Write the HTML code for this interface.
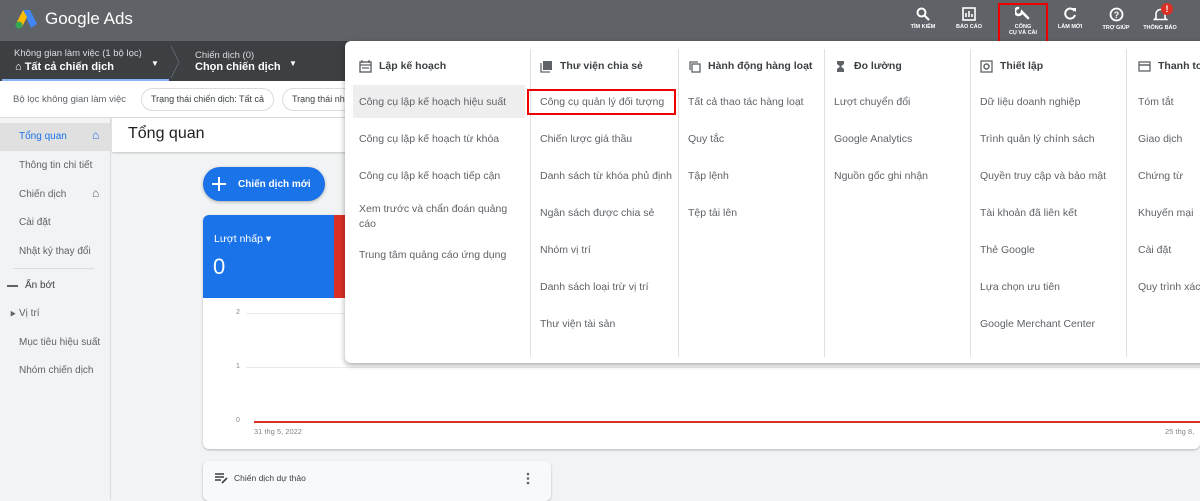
<!DOCTYPE html>
<html><head><meta charset="utf-8"><style>
*{box-sizing:border-box;margin:0;padding:0}
body{width:1200px;height:500px;overflow:hidden;position:relative;background:#f1f3f4;font-family:"Liberation Sans","Noto Sans CJK SC",sans-serif;color:#3c4043}
.a{position:absolute;white-space:nowrap}
.top{left:0;top:0;width:1200px;height:41px;background:#5f6368}
.bar2{left:0;top:41px;width:1200px;height:40px;background:#3c4043}
.filt{left:0;top:81px;width:1200px;height:37px;background:#fff;border-bottom:1px solid #dadce0}
.side{left:0;top:118px;width:111px;height:382px;background:#f1f3f4;border-right:1px solid #dadce0}
.si{font-size:10px;color:#5f6368;left:19px}
.ti{font-size:5.5px;color:#fff;font-weight:bold;text-align:center;width:50px;line-height:6px}
.ti svg{display:block;margin:0 auto 3px}
.menu{left:345px;top:41px;width:870px;height:322px;background:#fff;border-radius:6px;box-shadow:0 2px 6px rgba(0,0,0,.35)}
.dv{top:8px;width:1px;height:308px;background:#e0e0e0}
.mh{font-size:10.5px;color:#3c4043;font-weight:bold;top:18px;line-height:14px}
.mh svg{position:absolute;left:0;top:1px}
.mh span{position:absolute;left:20px;top:0}
.mi{font-size:10.5px;color:#5f6368}
.chip{top:88px;height:23px;border:1px solid #dadce0;border-radius:12px;font-size:9px;color:#3c4043;padding:5px 9px}
</style></head><body>
<div class="a top"></div>
<svg class="a" style="left:14px;top:9px" width="24" height="20" viewBox="0 0 24 20"><path d="M9 1 L16 1 L23 15 L17 19 Z" fill="#4285f4"/><path d="M9 1 L2 15 L8 18 L13 8Z" fill="#fbbc04"/><circle cx="5" cy="16" r="3.5" fill="#34a853"/></svg>
<div class="a" style="left:45px;top:9px;font-size:17px;color:#fff">Google Ads</div>
<div class="a ti" style="left:898px;top:7px"><svg width="14" height="14" viewBox="0 0 14 14"><circle cx="5.5" cy="5.5" r="4" stroke="#fff" stroke-width="2" fill="none"/><path d="M8.5 8.5L13 13" stroke="#fff" stroke-width="2.2"/></svg>TÌM KIẾM</div>
<div class="a ti" style="left:944px;top:7px"><svg width="14" height="14" viewBox="0 0 14 14"><rect x="1" y="1" width="12" height="12" stroke="#fff" stroke-width="1.6" fill="none"/><path d="M4 10V6M7 10V4M10 10V7" stroke="#fff" stroke-width="1.6"/></svg>BÁO CÁO</div>
<div class="a ti" style="left:998px;top:6px"><svg width="16" height="15" viewBox="0 0 16 15"><path d="M3 2 A3.5 3.5 0 1 0 7 6 L13 12" stroke="#fff" stroke-width="2.6" fill="none" stroke-linecap="round"/></svg>CÔNG<br>CỤ VÀ CÀI</div>
<div class="a" style="left:998px;top:3px;width:50px;height:42px;border:2px solid #e00"></div>
<div class="a ti" style="left:1045px;top:7px"><svg width="14" height="14" viewBox="0 0 14 14"><path d="M11.5 4A5 5 0 1 0 12 8" stroke="#fff" stroke-width="2" fill="none"/><path d="M9 1L13 1L13 5Z" fill="#fff"/></svg>LÀM MỚI</div>
<div class="a ti" style="left:1091px;top:7px"><svg width="15" height="15" viewBox="0 0 15 15"><circle cx="7.5" cy="7.5" r="6" stroke="#fff" stroke-width="1.8" fill="none"/><text x="4.8" y="11" font-size="9" font-weight="bold" fill="#fff" font-family="Liberation Sans">?</text></svg>TRỢ GIÚP</div>
<div class="a ti" style="left:1135px;top:7px"><svg width="15" height="15" viewBox="0 0 15 15"><path d="M3 11V7a4.5 4.5 0 0 1 9 0v4l1.5 1.5h-12Z" stroke="#fff" stroke-width="1.6" fill="none"/></svg>THÔNG BÁO</div>
<div class="a" style="left:1161px;top:3px;width:12px;height:12px;border-radius:6px;background:#d93025;color:#fff;font-size:9px;font-weight:bold;text-align:center;line-height:12px">!</div>
<div class="a bar2"></div>
<div class="a" style="left:14px;top:48px;font-size:9.5px;color:#dadce0">Không gian làm việc (1 bộ lọc)</div>
<div class="a" style="left:15px;top:61px;font-size:11px;color:#fff;font-weight:bold">⌂ Tất cả chiến dịch</div>
<div class="a" style="left:151px;top:59px;font-size:8px;color:#fff">▼</div>
<div class="a" style="left:2px;top:79px;width:167px;height:2px;background:#8ab4f8"></div>
<svg class="a" style="left:170px;top:45px" width="10" height="34"><path d="M1 1L9 17L1 33" stroke="#5f6368" fill="none"/></svg>
<div class="a" style="left:195px;top:50px;font-size:9.5px;color:#dadce0">Chiến dịch (0)</div>
<div class="a" style="left:195px;top:61px;font-size:11px;color:#fff;font-weight:bold">Chọn chiến dịch</div>
<div class="a" style="left:289px;top:59px;font-size:8px;color:#fff">▼</div>
<div class="a filt"></div>
<div class="a" style="left:13px;top:94px;font-size:9.5px;color:#5f6368">Bộ lọc không gian làm việc</div>
<div class="a chip" style="left:141px">Trạng thái chiến dịch: Tất cả</div>
<div class="a chip" style="left:282px;width:80px;overflow:hidden">Trạng thái nhóm</div>
<div class="a side"></div>
<div class="a" style="left:0;top:123px;width:111px;height:28px;background:#e0e0e0"></div>
<div class="a si" style="top:131px;color:#1a73e8">Tổng quan</div>
<div class="a" style="left:92px;top:128px;font-size:12px;color:#1a73e8">⌂</div>
<div class="a si" style="top:160px">Thông tin chi tiết</div>
<div class="a si" style="top:189px">Chiến dịch</div>
<div class="a" style="left:92px;top:186px;font-size:12px;color:#5f6368">⌂</div>
<div class="a si" style="top:217px">Cài đặt</div>
<div class="a si" style="top:246px">Nhật ký thay đổi</div>
<div class="a" style="left:13px;top:268px;width:81px;height:1px;background:#dadce0"></div>
<div class="a" style="left:7px;top:285px;width:11px;height:1.5px;background:#5f6368"></div>
<div class="a si" style="left:25px;top:280px;color:#3c4043">Ẩn bớt</div>
<div class="a" style="left:10px;top:309px;font-size:6px;color:#5f6368">▶</div>
<div class="a si" style="top:308px">Vị trí</div>
<div class="a si" style="top:337px">Mục tiêu hiệu suất</div>
<div class="a si" style="top:365px">Nhóm chiến dịch</div>
<div class="a" style="left:112px;top:118px;width:1088px;height:34px;background:#fff;box-shadow:0 1px 2px rgba(0,0,0,.2)"></div>
<div class="a" style="left:128px;top:125px;font-size:16px;color:#202124">Tổng quan</div>
<div class="a" style="left:203px;top:167px;width:122px;height:34px;border-radius:17px;background:#1a73e8;box-shadow:0 1px 3px rgba(0,0,0,.3);color:#fff;font-size:10px;font-weight:bold;padding:12px 0 0 35px">Chiến dịch mới</div>
<svg class="a" style="left:212px;top:177px" width="14" height="14"><path d="M7 0V14M0 7H14" stroke="#fff" stroke-width="2"/></svg>
<div class="a" style="left:203px;top:215px;width:997px;height:234px;background:#fff;border-radius:6px;box-shadow:0 1px 2px rgba(0,0,0,.25)"></div>
<div class="a" style="left:203px;top:215px;width:131px;height:83px;background:#1a73e8;border-radius:6px 0 0 0"></div>
<div class="a" style="left:334px;top:215px;width:12px;height:83px;background:#d93025"></div>
<div class="a" style="left:214px;top:233px;font-size:10.5px;color:#fff">Lượt nhấp ▾</div>
<div class="a" style="left:213px;top:254px;font-size:22px;color:#fff">0</div>
<div class="a" style="left:236px;top:309px;font-size:7px;color:#80868b">2</div>
<div class="a" style="left:236px;top:363px;font-size:7px;color:#80868b">1</div>
<div class="a" style="left:236px;top:417px;font-size:7px;color:#80868b">0</div>
<div class="a" style="left:246px;top:313px;width:954px;height:1px;background:#e8eaed"></div>
<div class="a" style="left:246px;top:367px;width:954px;height:1px;background:#e8eaed"></div>
<div class="a" style="left:254px;top:421px;width:946px;height:1.5px;background:#d93025"></div>
<div class="a" style="left:254px;top:427px;font-size:7.5px;color:#80868b">31 thg 5, 2022</div>
<div class="a" style="left:1165px;top:427px;font-size:7.5px;color:#80868b">25 thg 8,</div>
<div class="a" style="left:203px;top:461px;width:348px;height:40px;background:#f8f9fa;border-radius:6px;box-shadow:0 1px 2px rgba(0,0,0,.25)"></div>
<svg class="a" style="left:215px;top:473px" width="13" height="11"><path d="M0 1H9M0 4H9M0 7H6" stroke="#3c4043" stroke-width="1.4"/><path d="M7 10L12 5" stroke="#3c4043" stroke-width="1.6"/></svg>
<div class="a" style="left:234px;top:473px;font-size:8.5px;color:#3c4043">Chiến dịch dự thảo</div>
<svg class="a" style="left:526px;top:472px" width="4" height="13"><circle cx="2" cy="2" r="1.3" fill="#5f6368"/><circle cx="2" cy="6.5" r="1.3" fill="#5f6368"/><circle cx="2" cy="11" r="1.3" fill="#5f6368"/></svg>
<div class="a menu">
<div class="a dv" style="left:185px"></div><div class="a dv" style="left:333px"></div><div class="a dv" style="left:479px"></div><div class="a dv" style="left:625px"></div><div class="a dv" style="left:781px"></div>
<div class="a" style="left:8px;top:44px;width:172px;height:33px;background:#eeeeee"></div>
<div class="a mh" style="left:14px"><svg width="13" height="13" viewBox="0 0 13 13"><rect x="1" y="2" width="11" height="10" stroke="#5f6368" stroke-width="1.4" fill="none"/><path d="M1 5H12M3 0V3M10 0V3M3 8H10" stroke="#5f6368" stroke-width="1.3"/></svg><span>Lập kế hoạch</span></div>
<div class="a mi" style="left:14px;top:55px">Công cụ lập kế hoạch hiệu suất</div>
<div class="a mi" style="left:14px;top:92px">Công cụ lập kế hoạch từ khóa</div>
<div class="a mi" style="left:14px;top:129px">Công cụ lập kế hoạch tiếp cận</div>
<div class="a mi" style="left:14px;top:161px;line-height:15px">Xem trước và chẩn đoán quảng<br>cáo</div>
<div class="a mi" style="left:14px;top:208px">Trung tâm quảng cáo ứng dụng</div>
<div class="a mh" style="left:195px"><svg width="13" height="13" viewBox="0 0 13 13"><rect x="3" y="1" width="9" height="9" fill="#5f6368"/><path d="M1 3V12H10" stroke="#5f6368" stroke-width="1.3" fill="none"/></svg><span>Thư viện chia sẻ</span></div>
<div class="a" style="left:182px;top:48px;width:149px;height:26px;border:2px solid #e00"></div>
<div class="a mi" style="left:195px;top:55px">Công cụ quản lý đối tượng</div>
<div class="a mi" style="left:195px;top:92px">Chiến lược giá thầu</div>
<div class="a mi" style="left:195px;top:129px">Danh sách từ khóa phủ định</div>
<div class="a mi" style="left:195px;top:166px">Ngân sách được chia sẻ</div>
<div class="a mi" style="left:195px;top:203px">Nhóm vị trí</div>
<div class="a mi" style="left:195px;top:240px">Danh sách loại trừ vị trí</div>
<div class="a mi" style="left:195px;top:277px">Thư viện tài sản</div>
<div class="a mh" style="left:343px"><svg width="13" height="13" viewBox="0 0 13 13"><rect x="4" y="4" width="8" height="8" stroke="#5f6368" stroke-width="1.3" fill="none"/><path d="M2 10V2H10" stroke="#5f6368" stroke-width="1.3" fill="none"/></svg><span>Hành động hàng loạt</span></div>
<div class="a mi" style="left:343px;top:55px">Tất cả thao tác hàng loạt</div>
<div class="a mi" style="left:343px;top:92px">Quy tắc</div>
<div class="a mi" style="left:343px;top:129px">Tập lệnh</div>
<div class="a mi" style="left:343px;top:166px">Tệp tải lên</div>
<div class="a mh" style="left:489px"><svg width="13" height="13" viewBox="0 0 13 13"><path d="M3 1H10V4L7 6.5L10 9V12H3V9L6 6.5L3 4Z" fill="#5f6368"/></svg><span>Đo lường</span></div>
<div class="a mi" style="left:489px;top:55px">Lượt chuyển đổi</div>
<div class="a mi" style="left:489px;top:92px">Google Analytics</div>
<div class="a mi" style="left:489px;top:129px">Nguồn gốc ghi nhận</div>
<div class="a mh" style="left:635px"><svg width="13" height="13" viewBox="0 0 13 13"><rect x="1" y="1" width="11" height="11" stroke="#5f6368" stroke-width="1.3" fill="none"/><circle cx="6.5" cy="6.5" r="2.5" stroke="#5f6368" stroke-width="1.5" fill="none"/></svg><span>Thiết lập</span></div>
<div class="a mi" style="left:635px;top:55px">Dữ liệu doanh nghiệp</div>
<div class="a mi" style="left:635px;top:92px">Trình quản lý chính sách</div>
<div class="a mi" style="left:635px;top:129px">Quyền truy cập và bảo mật</div>
<div class="a mi" style="left:635px;top:166px">Tài khoản đã liên kết</div>
<div class="a mi" style="left:635px;top:203px">Thẻ Google</div>
<div class="a mi" style="left:635px;top:240px">Lựa chọn ưu tiên</div>
<div class="a mi" style="left:635px;top:277px">Google Merchant Center</div>
<div class="a mh" style="left:793px"><svg width="13" height="13" viewBox="0 0 13 13"><rect x="1" y="2" width="11" height="9" stroke="#5f6368" stroke-width="1.3" fill="none"/><path d="M1 5H12" stroke="#5f6368" stroke-width="1.5"/></svg><span>Thanh toán</span></div>
<div class="a mi" style="left:793px;top:55px">Tóm tắt</div>
<div class="a mi" style="left:793px;top:92px">Giao dịch</div>
<div class="a mi" style="left:793px;top:129px">Chứng từ</div>
<div class="a mi" style="left:793px;top:166px">Khuyến mại</div>
<div class="a mi" style="left:793px;top:203px">Cài đặt</div>
<div class="a mi" style="left:793px;top:240px">Quy trình xác minh</div>
</div>
</body></html>
